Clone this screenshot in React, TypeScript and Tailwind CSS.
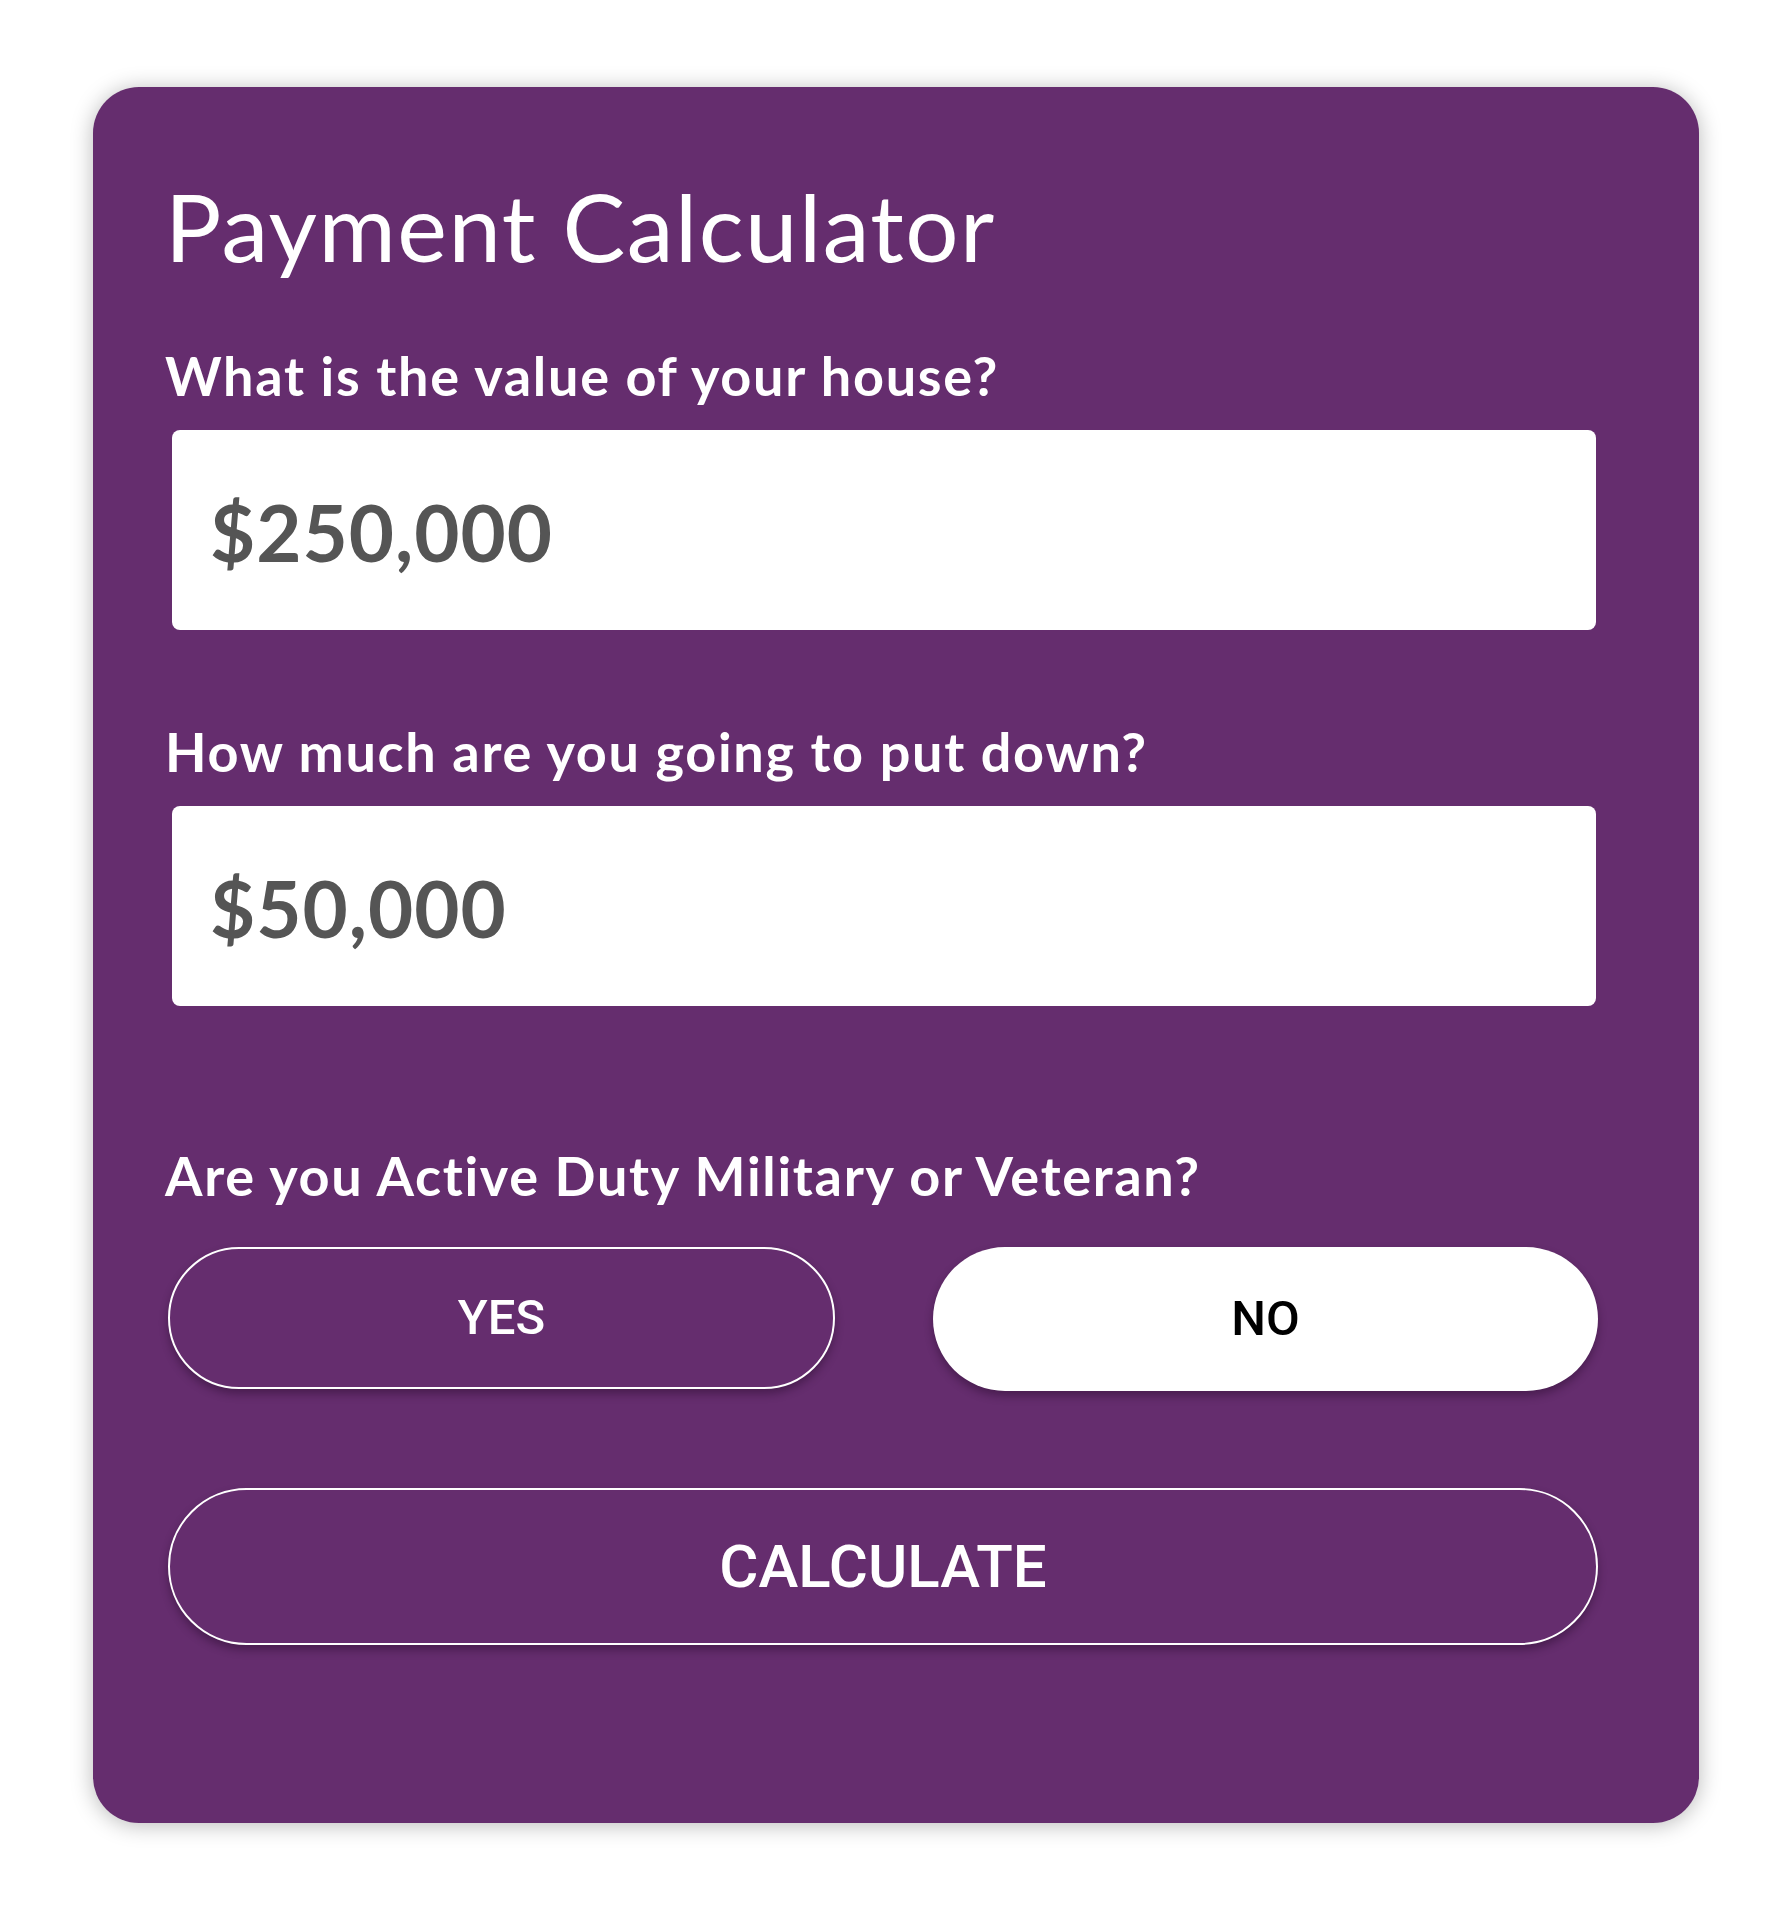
const fieldLabel = "block text-[54px] leading-[54px] font-bold tracking-[1.7px] text-white";

const App = () => {
  return (
    <div className="min-h-screen w-full bg-white font-['Lato',sans-serif]">
      <div className="pt-[87px] pl-[93px]">
        <div className="CARD w-[1606px] h-[1736px] rounded-[46px] bg-[#652d6e] pt-[92px] pl-[72px] shadow-[0_2px_22px_rgba(0,0,0,0.28)]">
          <h1 className="text-[94px] leading-[93px] font-normal tracking-[1.5px] text-white">
            Payment Calculator
          </h1>

          <label className={`${fieldLabel} mt-[77px]`}>
            What is the value of your house?
          </label>
          <div className="INPUT ml-[7px] mt-[27px] flex h-[200px] w-[1424px] items-center rounded-lg bg-white pl-[38px] pt-1">
            <span className="text-[78px] leading-[78px] font-bold tracking-[1px] text-[#555555]">
              $250,000
            </span>
          </div>

          <label className={`${fieldLabel} mt-[95px]`}>
            How much are you going to put down?
          </label>
          <div className="INPUT ml-[7px] mt-[27px] flex h-[200px] w-[1424px] items-center rounded-lg bg-white pl-[38px] pt-1">
            <span className="text-[78px] leading-[78px] font-bold tracking-[1px] text-[#555555]">
              $50,000
            </span>
          </div>

          <label className={`${fieldLabel} mt-[143px]`}>
            Are you Active Duty Military or Veteran?
          </label>
          <div className="BTN_ROW ml-[3px] mt-[44px] flex w-[1430px] gap-[98px] font-['Roboto',sans-serif]">
            <button className="flex h-[142px] w-[667px] items-center justify-center rounded-full border-2 border-white bg-[#652d6e] text-[49px] font-medium text-white shadow-[0_5px_8px_rgba(40,10,45,0.45)]">
              YES
            </button>
            <button className="flex h-[144px] w-[665px] items-center justify-center rounded-full bg-white text-[49px] font-medium text-black shadow-[0_5px_8px_rgba(40,10,45,0.45)]">
              NO
            </button>
          </div>

          <button className="CALCULATE ml-[3px] mt-[97px] flex h-[157px] w-[1430px] items-center justify-center rounded-full border-2 border-white bg-[#652d6e] font-['Roboto',sans-serif] text-[60px] font-medium text-white shadow-[0_5px_8px_rgba(40,10,45,0.45)]">
            CALCULATE
          </button>
        </div>
      </div>
    </div>
  );
};

export default App;
